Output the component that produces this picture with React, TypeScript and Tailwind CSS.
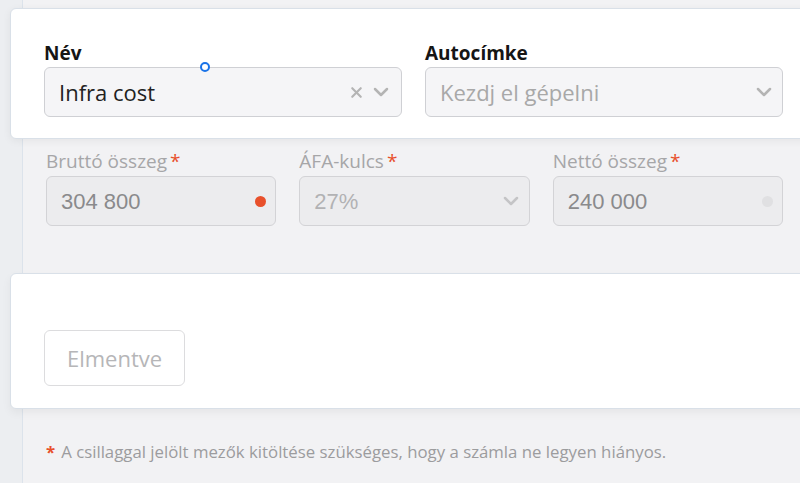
import { ChevronDown, X } from 'lucide-react';

const sans = "font-['Open_Sans',_'Liberation_Sans',_sans-serif]";
const arial = "font-['Liberation_Sans',_Arial,_sans-serif]";

function Star() {
  return <span className="text-[#e8502b] ml-[3px]">*</span>;
}

export default function App() {
  return (
    <div className={`w-[800px] h-[483px] overflow-hidden flex bg-[#eceef1] ${sans}`}>
      {/* left rail */}
      <div className="w-[22px] shrink-0 bg-[#eceef1]" />

      <div className="flex-1 min-w-0 flex flex-col border-l border-[#dce3eb] bg-[#f2f2f4]">
        {/* top card */}
        <div className="mt-2 -ml-[13px] w-[808px] bg-white border border-[#d9e0e8] rounded-md shadow-[0_2px_8px_rgba(0,0,0,0.06)] pt-[33px] pb-[21px] pl-[33px] pr-[34px]">
          <div className="grid grid-cols-2 gap-[23px] w-[739px]">
            <div className="flex flex-col">
              <label className="text-[19px] font-bold text-[#151515] leading-[22px] mb-[3px]">Név</label>
              <div className="relative h-[50px] rounded-md border border-[#cfd0d4] bg-[#f5f5f7] flex items-center pl-[14px] pr-[8px]">
                <span className="flex-1 text-[22px] text-[#222]">Infra cost</span>
                <X className="w-[17px] h-[17px] text-[#b4b4b4]" strokeWidth={3} />
                <ChevronDown className="w-[24px] h-[24px] text-[#b4b4b4] ml-[4px]" strokeWidth={2.5} />
                <span className="absolute left-[155px] -top-[6px] w-[10px] h-[10px] rounded-full border-2 border-[#1a73e8] bg-white" />
              </div>
            </div>
            <div className="flex flex-col">
              <label className="text-[19px] font-bold text-[#151515] leading-[22px] mb-[3px]">Autocímke</label>
              <div className="h-[50px] rounded-md border border-[#cfd0d4] bg-[#f5f5f7] flex items-center pl-[14px] pr-[6px]">
                <span className="flex-1 text-[22px] text-[#a8a8a8]">Kezdj el gépelni</span>
                <ChevronDown className="w-[24px] h-[24px] text-[#b4b4b4]" strokeWidth={2.5} />
              </div>
            </div>
          </div>
        </div>

        {/* amounts (disabled) */}
        <div className="pl-[23px] pt-[11px] grid grid-cols-3 gap-x-[23px] w-[760px]">
          <div className="flex flex-col">
            <label className="text-[19px] text-[#a6a6a8] leading-[22px] mb-[4px]">Bruttó összeg<Star /></label>
            <div className="h-[50px] rounded-md border border-[#d3d3d6] bg-[#ececee] flex items-center pl-[14px] pr-[9px]">
              <span className={`flex-1 text-[22px] text-[#8a8a8c] ${arial}`}>304 800</span>
              <span className="w-[11px] h-[11px] rounded-full bg-[#e8502b]" />
            </div>
          </div>
          <div className="flex flex-col">
            <label className="text-[19px] text-[#a6a6a8] leading-[22px] mb-[4px]">ÁFA-kulcs<Star /></label>
            <div className="h-[50px] rounded-md border border-[#d3d3d6] bg-[#ececee] flex items-center pl-[14px] pr-[6px]">
              <span className={`flex-1 text-[22px] text-[#b2b2b4] ${arial}`}>27%</span>
              <ChevronDown className="w-[24px] h-[24px] text-[#c4c4c6]" strokeWidth={2.5} />
            </div>
          </div>
          <div className="flex flex-col">
            <label className="text-[19px] text-[#a6a6a8] leading-[22px] mb-[4px]">Nettó összeg<Star /></label>
            <div className="h-[50px] rounded-md border border-[#d3d3d6] bg-[#ececee] flex items-center pl-[14px] pr-[9px]">
              <span className={`flex-1 text-[22px] text-[#8a8a8c] ${arial}`}>240 000</span>
              <span className="w-[11px] h-[11px] rounded-full bg-[#e0e0e2]" />
            </div>
          </div>
        </div>

        {/* save card */}
        <div className="mt-[47px] -ml-[13px] w-[808px] h-[136px] bg-white border border-[#d9e0e8] rounded-md shadow-[0_4px_10px_rgba(0,0,0,0.05)] pl-[33px] pt-[56px]">
          <button className="w-[141px] h-[56px] rounded-md border border-[#dcdcde] bg-white text-[22px] text-[#b6b6b8]">
            Elmentve
          </button>
        </div>

        <p className="pl-[23px] mt-[30px] text-[16.8px] text-[#9c9c9e]">
          <span className="text-[#e8502b] font-bold mr-[6px]">*</span>A csillaggal jelölt mezők kitöltése szükséges, hogy a számla ne legyen hiányos.
        </p>
      </div>
    </div>
  );
}
